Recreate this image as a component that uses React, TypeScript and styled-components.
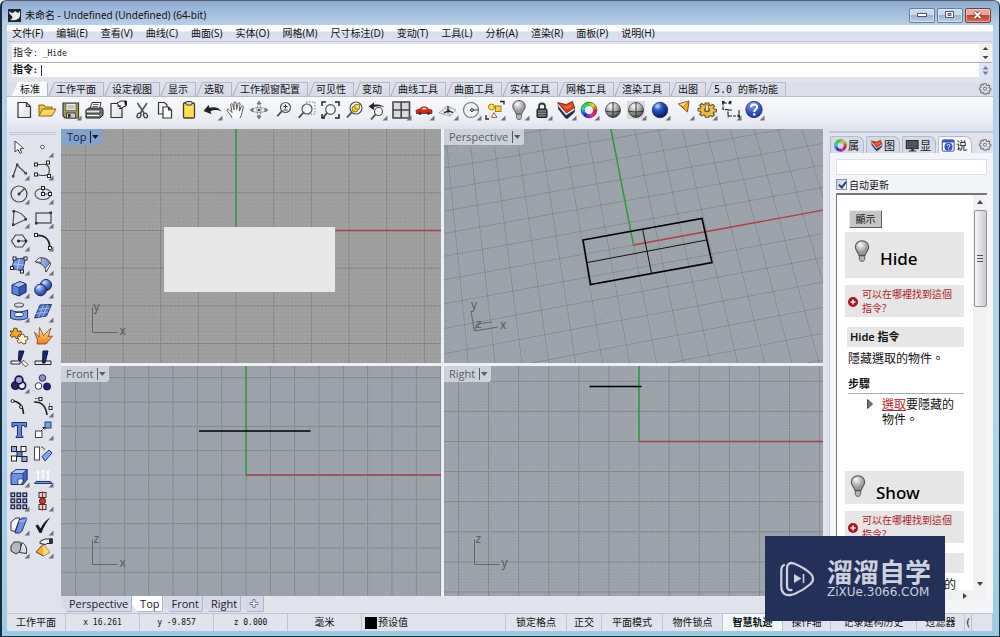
import React from 'react';
import styled, { createGlobalStyle, css } from 'styled-components';

const UI_FONT = '"Noto Sans", "Noto Sans CJK SC", sans-serif';
const VIEW_FONT = '"Open Sans", "Noto Sans", sans-serif';
const SONG_FONT = '"DejaVu Sans Mono", "Noto Sans CJK SC", monospace';
const HELP_FONT = '"Noto Sans", "Noto Sans CJK TC", sans-serif';

const GlobalStyle = createGlobalStyle`
  * { box-sizing: border-box; }
  body { margin: 0; font-family: ${UI_FONT}; font-size: 10px; color: #111; overflow: hidden; }
  button { font: inherit; color: inherit; margin: 0; padding: 0; border: 0; background: none; }
  svg { display: block; }
`;

/* ---------- frame ---------- */

const Window = styled.div`
  display: flex;
  flex-direction: column;
  height: 100vh;
  border: solid #16303f;
  border-width: 1px 1px 1px 2px;
  border-top-color: #5a5f70;
  border-radius: 6px 6px 0 0;
  background: linear-gradient(#8eabd0 0, #b7d0ea 24px, #b5d5ef 60%, #9ccbe4 100%);
  overflow: hidden;
`;

const TitleBar = styled.header`
  display: flex;
  align-items: center;
  gap: 4px;
  flex: none;
  height: 24px;
  padding: 4px 8px 0 6px;
`;

const Title = styled.h1`
  flex: 1;
  margin: 0;
  font-size: 10px;
  font-weight: 400;
  line-height: 16px;
  white-space: nowrap;
`;

const CaptionButtons = styled.div`
  display: flex;
  gap: 2px;
`;

const CaptionButton = styled.button<{ $close?: boolean }>`
  display: flex;
  align-items: center;
  justify-content: center;
  width: 26px;
  height: 15px;
  border: 1px solid ${(p) => (p.$close ? '#7d3a3c' : '#68809c')};
  border-radius: 2px;
  background: ${(p) =>
    p.$close
      ? 'linear-gradient(#e4a79c 0 45%, #c9402c 50%, #d9705a 100%)'
      : 'linear-gradient(#c8daee 0 45%, #9db6d2 50%, #b9cfe8 100%)'};
  box-shadow: inset 0 0 0 1px rgba(255, 255, 255, 0.4);
`;

const Client = styled.div`
  display: flex;
  flex-direction: column;
  flex: 1;
  min-height: 0;
  margin: 0 6px 5px 5px;
  background: #e0e2ec;
`;

const MenuBar = styled.nav`
  display: flex;
  gap: 13px;
  flex: none;
  height: 17px;
  padding-left: 5px;
  border-bottom: 1px solid #c3c7d8;
  background: linear-gradient(#fbfcfe 0 6px, #d8deee 7px, #dbe1f0 100%);
`;

const MenuItem = styled.button`
  line-height: 16px;
  white-space: nowrap;
`;

/* ---------- command line ---------- */

const CommandArea = styled.section`
  flex: none;
  padding: 2px 1px 5px 5px;
  font-family: ${SONG_FONT};
`;

const CommandRow = styled.div<{ $prompt?: boolean }>`
  display: flex;
  align-items: center;
  height: ${(p) => (p.$prompt ? 14 : 19)}px;
  border-bottom: ${(p) => (p.$prompt ? '0' : '1px solid #a9adb8')};
  background: #fff;
  font-weight: ${(p) => (p.$prompt ? 700 : 400)};
`;

const CommandText = styled.label`
  padding-left: 1px;
  line-height: 14px;
  white-space: pre;
`;

const Latin = styled.span`
  font-size: 8px;
`;

const CommandInput = styled.input`
  flex: 1;
  min-width: 0;
  height: 11px;
  margin-left: 3px;
  padding: 0 2px;
  border: 0;
  border-left: 1px solid #333;
  outline: 0;
  background: transparent;
  font: inherit;
`;

const Stepper = styled.div<{ $tint?: boolean }>`
  display: flex;
  align-items: center;
  justify-content: center;
  align-self: stretch;
  width: 13px;
  background: ${(p) => (p.$tint ? '#dfe4f2' : '#f3f3f4')};
`;

/* ---------- toolbar ---------- */

const TabStrip = styled.div`
  display: flex;
  align-items: stretch;
  flex: none;
  height: 15px;
  padding: 0 1px 0 5px;
  border-bottom: 1px solid #b8bccb;
  font-family: ${SONG_FONT};
  background: #dcdee8;
`;

const ToolTab = styled.button<{ $on?: boolean }>`
  position: relative;
  flex: none;
  padding: 0 7px 0 8px;
  border-top: 1px solid ${(p) => (p.$on ? '#fff' : '#b4b8c8')};
  border-right: 1px solid #b4b8c8;
  background: ${(p) => (p.$on ? '#f8f9fc' : 'linear-gradient(#dfe2ec, #d6d9e6)')};
  clip-path: polygon(6px 0, 100% 0, 100% 100%, 0 100%);
  line-height: 13px;
  white-space: nowrap;
  &::before {
    content: '';
    position: absolute;
    left: 3px;
    top: 0;
    bottom: 0;
    width: 1px;
    background: ${(p) => (p.$on ? '#fff' : '#a4a8ba')};
    transform: skewX(-22deg);
  }
`;

const Spacer = styled.div`
  flex: 1;
`;

const ToolBar = styled.div`
  flex: none;
  height: 32px;
  padding: 1px 0 0 5px;
  background: linear-gradient(#f8f9fc, #eceef4 70%, #dfe2ec);
`;

const ToolRow = styled.div`
  display: grid;
  grid-template-columns: repeat(32, minmax(0, 1fr));
  justify-items: center;
  max-width: 754px;
`;

const ToolButton = styled.button`
  width: 24px;
  height: 24px;
`;

/* ---------- workspace ---------- */

const Workspace = styled.div`
  display: flex;
  flex: 1;
  min-height: 0;
`;

const Palette = styled.aside`
  flex: none;
  width: 54px;
  padding-top: 3px;
`;

const PaletteGrip = styled.div`
  height: 3px;
  margin: 0 5px 0 2px;
  border: solid #c4c7d2;
  border-width: 1px 0;
`;

const PaletteGrid = styled.div`
  display: grid;
  grid-template: repeat(18, minmax(0, 1fr)) / 24px 24px;
  align-items: center;
  height: 425px;
`;

const Center = styled.main`
  display: flex;
  flex-direction: column;
  flex: 1;
  min-width: 0;
`;

const Viewports = styled.div`
  display: grid;
  grid-template: 233fr 230fr / 380fr 379fr;
  gap: 3px;
  flex: 1;
  min-height: 0;
  background: #eef0f5;
`;

const Viewport = styled.section<{ $active?: boolean }>`
  position: relative;
  overflow: hidden;
  background: ${(p) => (p.$active ? '#a1a2a1' : '#a0a7af')};
  > svg {
    position: absolute;
    inset: 0;
  }
`;

const ViewLabel = styled.button<{ $active?: boolean }>`
  position: absolute;
  left: 0;
  top: 0;
  display: flex;
  align-items: center;
  gap: 4px;
  height: 16px;
  padding: 0 3px 0 ${(p) => (p.$active ? 6 : 5)}px;
  border-radius: 0 0 3px 0;
  background: ${(p) => (p.$active ? '#84a3cb' : '#cdd2d9')};
  color: ${(p) => (p.$active ? '#0b1a3c' : '#575c64')};
  font-family: ${VIEW_FONT};
  font-size: 11px;
  line-height: 16px;
`;

const ViewTabs = styled.div`
  display: flex;
  align-items: flex-start;
  flex: none;
  height: 17px;
`;

const ViewTab = styled.button<{ $on?: boolean }>`
  height: 16px;
  padding: 0 3px 0 8px;
  border: solid #b0b5cc;
  border-width: 0 1px 1px 0;
  border-radius: 0 0 2px 0;
  background: ${(p) => (p.$on ? '#fff' : '#d5d9ea')};
  clip-path: polygon(0 0, 100% 0, 100% 100%, 6px 100%, 0 9px);
  font-family: ${VIEW_FONT};
  font-size: 11px;
  line-height: 15px;
  color: #222;
`;

/* ---------- help panel ---------- */

const Panel = styled.aside`
  display: flex;
  flex-direction: column;
  flex: none;
  width: 164px;
  margin: 2px 0 0 6px;
  border-top: 2px solid #b9c9e0;
`;

const PanelTabs = styled.div`
  display: flex;
  gap: 2px;
  flex: none;
  height: 20px;
  padding: 3px 1px 0 1px;
`;

const PanelTab = styled.button<{ $on?: boolean }>`
  display: flex;
  align-items: center;
  width: 34px;
  padding-left: 2px;
  border: 1px solid #b4b8c8;
  border-bottom: 0;
  border-radius: 2px 7px 0 0;
  background: ${(p) => (p.$on ? '#f8f9fc' : '#d6d9e6')};
  font-size: 11px;
  line-height: 15px;
`;

const PanelBody = styled.div`
  display: flex;
  flex-direction: column;
  flex: 1;
  min-height: 0;
  padding: 6px 6px 0 6px;
  border-left: 1px solid #c9ccd8;
  background: #f4f5f9;
`;

const SearchBox = styled.input`
  width: 100%;
  height: 16px;
  padding: 0 3px;
  border: 1px solid #dcdfe7;
  background: #fff;
  font: inherit;
`;

const AutoUpdate = styled.label`
  display: flex;
  align-items: center;
  gap: 2px;
  height: 18px;
  white-space: nowrap;
`;

const TickBox = styled.input`
  appearance: none;
  width: 11px;
  height: 11px;
  margin: 0;
  border: 1px solid #8497ad;
  background: linear-gradient(135deg, #c6cfdb, #f6f8fa);
  position: relative;
  &:checked::after {
    content: '';
    position: absolute;
    left: 3px;
    top: 0;
    width: 3px;
    height: 6px;
    border: solid #2a3f80;
    border-width: 0 2px 2px 0;
    transform: rotate(38deg);
  }
`;

const HelpFrame = styled.div`
  display: flex;
  flex: 1;
  min-height: 0;
  border: solid #73767d;
  border-width: 2px 0 0 1px;
  background: #fff;
`;

const HelpPage = styled.article`
  flex: 1;
  min-width: 0;
  overflow: hidden;
  padding: 15px 9px 0 8px;
  font-family: ${HELP_FONT};
  font-size: 12px;
  line-height: 15px;
`;

const ShowButton = styled.button`
  display: block;
  width: 33px;
  height: 18px;
  margin: 0 0 4px 4px;
  border: 1px solid;
  border-color: #ededed #5c5c5c #5c5c5c #ededed;
  background: #c6c6c6;
  font-size: 10px;
  line-height: 15px;
`;

const CommandTitle = styled.h2<{ $compact?: boolean }>`
  display: flex;
  align-items: flex-end;
  gap: 5px;
  height: ${(p) => (p.$compact ? 33 : 46)}px;
  margin: 0;
  padding: ${(p) => (p.$compact ? '0' : '0 0 8px 4px')};
  background: #e6e6e6;
  color: #000;
  font-size: 17px;
  font-weight: 500;
  line-height: 22px;
  > svg {
    align-self: flex-start;
    margin-top: ${(p) => (p.$compact ? 2 : 6)}px;
  }
`;

const WhereLink = styled.a`
  display: flex;
  align-items: center;
  gap: 3px;
  height: 32px;
  margin: 7px 0 10px;
  padding-left: 2px;
  background: #e6e6e6;
  color: #b01825;
  font-size: 10px;
  line-height: 14px;
  text-decoration: none;
  > svg {
    flex: none;
  }
`;

const SectionTitle = styled.h3`
  height: 20px;
  margin: 0 0 0 2px;
  padding-left: 3px;
  background: #e6e6e6;
  font-size: 11px;
  font-weight: 600;
  line-height: 20px;
`;

const Paragraph = styled.p`
  margin: 4px -6px 10px 3px;
  white-space: nowrap;
`;

const StepsTitle = styled.h4`
  margin: 0 0 3px 3px;
  padding-bottom: 1px;
  border-bottom: 1px solid #aaadb3;
  font-size: 11px;
  font-weight: 600;
  line-height: 16px;
`;

const Steps = styled.ul`
  list-style: none;
  margin: 0 -6px 44px 21px;
  padding: 0;
`;

const Step = styled.li`
  display: flex;
  gap: 8px;
  > svg {
    flex: none;
    margin-top: 2px;
  }
  a {
    color: #c2222c;
  }
`;

const HelpScroll = styled.div`
  display: flex;
  flex-direction: column;
  align-items: center;
  flex: none;
  width: 14px;
  padding: 5px 0 4px;
  background: #f1f1f2;
`;

const HelpScrollAcross = styled.div`
  display: flex;
  align-items: center;
  justify-content: flex-end;
  flex: none;
  height: 11px;
  margin-bottom: 12px;
  padding-right: 20px;
  border-left: 1px solid #73767d;
  background: #f1f1f2;
`;

const ScrollThumb = styled.div`
  display: flex;
  align-items: center;
  justify-content: center;
  width: 13px;
  height: 97px;
  margin: 6px 0 auto;
  border: 1px solid #8f9196;
  border-radius: 2px;
  background: linear-gradient(90deg, #f6f6f6, #c9cacd);
`;

/* ---------- status ---------- */

const StatusBar = styled.footer`
  display: flex;
  flex: none;
  height: 18px;
  border-top: 1px solid #bfc3cf;
  font-family: ${SONG_FONT};
  line-height: 17px;
`;

const StatusCell = styled.button<{ $w?: number; $on?: boolean }>`
  display: flex;
  align-items: center;
  justify-content: ${(p) => (p.$w ? 'center' : 'flex-start')};
  gap: 1px;
  ${(p) =>
    p.$w
      ? css`
          flex: none;
          width: ${p.$w}px;
        `
      : css`
          flex: 1;
          min-width: 0;
          padding-left: 3px;
        `}
  border-right: 1px solid #bfc3cf;
  background: ${(p) => (p.$on ? '#eef8fe' : 'transparent')};
  font-weight: ${(p) => (p.$on ? 700 : 400)};
  white-space: pre;
`;

const Swatch = styled.span`
  width: 12px;
  height: 12px;
  background: #000;
`;

const Watermark = styled.div`
  position: fixed;
  right: 55px;
  bottom: 16px;
  display: flex;
  align-items: center;
  gap: 12px;
  width: 180px;
  height: 85px;
  padding-left: 15px;
  background: #233057;
  color: #ccd1dc;
`;

const Brand = styled.div`
  padding-bottom: 4px;
`;

const BrandName = styled.div`
  font-family: 'Noto Sans CJK SC', sans-serif;
  font-size: 26px;
  font-weight: 700;
  line-height: 30px;
  white-space: nowrap;
`;

const BrandSite = styled.div`
  font-family: 'DejaVu Sans', sans-serif;
  font-size: 12px;
  line-height: 12px;
`;

/* ---------- icon artwork, 24 x 24 each ---------- */

const K = '#333';
const Sq = ({ x, y, s = 3 }: { x: number; y: number; s?: number }) => (
  <rect x={x - s / 2} y={y - s / 2} width={s} height={s} fill="#fff" stroke="#222" strokeWidth="1" />
);
const Lens = ({ x = 14, y = 10, r = 4.5 }: { x?: number; y?: number; r?: number }) => (
  <>
    <circle cx={x} cy={y} r={r} fill="#f4f5f8" stroke="#555" strokeWidth="1.2" />
    <path d={`M${x - r * 0.75} ${y + r * 0.75}L${x - r * 0.75 - 4.5} ${y + r * 0.75 + 5}`} stroke="#444" strokeWidth="1.8" />
  </>
);
const HUES = Array.from({ length: 18 }, (_, i) => i * 20);
const Ring = ({ r = 6.2, w = 3.4 }: { r?: number; w?: number }) => (
  <>
    {HUES.map((h) => {
      const a = (h * Math.PI) / 180;
      const b = ((h + 21) * Math.PI) / 180;
      return (
        <path
          key={h}
          d={`M${12 + r * Math.cos(a)} ${12 + r * Math.sin(a)}A${r} ${r} 0 0 1 ${12 + r * Math.cos(b)} ${12 + r * Math.sin(b)}`}
          fill="none"
          stroke={`hsl(${360 - h}, 85%, 48%)`}
          strokeWidth={w}
        />
      );
    })}
    <circle cx="12" cy="12" r={r + w / 2} fill="none" stroke="#444" strokeWidth=".7" />
    <circle cx="12" cy="12" r={r - w / 2} fill="none" stroke="#555" strokeWidth=".6" />
  </>
);
const Bulb = () => (
  <>
    <path d="M12 2.500c-3.700 0-6.200 2.600-6.200 5.900 0 3.400 2.900 4.400 3.400 7.600h5.600c.5-3.200 3.400-4.200 3.400-7.600 0-3.300-2.500-5.900-6.200-5.900z" fill="url(#silver)" stroke="#555" />
    <path d="M9.500 16.500h5v3l-1.200 2h-2.600l-1.200-2z" fill="#b5b5b5" stroke="#555" strokeWidth=".8" />
    <path d="M8.500 7c.6-1.300 1.700-2 3-2.100" fill="none" stroke="#fff" strokeWidth="1.200" />
  </>
);
const Wedge = () => (
  <>
    <path d="M4.500 8v3l7 9 2 .5 7-6.500V9.500z" fill="#23295c" stroke="#15183a" strokeWidth=".6" />
    <path d="M4 5.500v2.500l8 9.500 8.500-5.500V9z" fill="#f3f3f7" stroke="#444" strokeWidth=".5" />
    <path d="M3.500 4.500l8.500 2 6.500-3 2 6-8 5.500z" fill="#e33a1c" stroke="#5a1408" strokeWidth=".7" />
    <path d="M8 7.500l4.500 1.200 5-2.400.5 2-5 2.700z" fill="#f7793c" />
  </>
);
const Gray = () => (
  <>
    <circle cx="12" cy="12" r="7.500" fill="url(#ball)" stroke="#444" strokeWidth=".8" />
    <path d="M12 4.500v15M4.500 13c4 1.300 11 1.300 15 0" fill="none" stroke="#333" strokeWidth="1" />
  </>
);
const Gear = ({ fill = 'none', stroke = '#777', w = 1.8 }: { fill?: string; stroke?: string; w?: number }) => (
  <>
    <path
      d="M10 4h4l.5 2.500 1.500.7 2.200-1.400 2.100 2.300-1.400 2 .6 1.400 2.500.5v3l-2.500.5-.7 1.500 1.300 2-2.200 2.100-2-1.300-1.500.6L13.800 22h-3.500l-.6-2.500-1.400-.6-2.100 1.300L4 18l1.400-2-.6-1.500L2.300 14v-3l2.500-.6.6-1.400L4 7l2.200-2.200 2 1.400 1.400-.7z"
      transform="translate(0 -1)"
      fill={fill}
      stroke={stroke}
      strokeWidth={w}
    />
    <circle cx="12" cy="11.500" r="2.500" fill="#f0f1f5" stroke={stroke} strokeWidth={w} />
  </>
);
const Cube = ({ c = '#5b82dd' }: { c?: string }) => (
  <>
    <path d="M5 9l8-3.500 6 2.500v8l-7 4-7-2.500z" fill={c} stroke="#1c2c66" />
    <path d="M5 9l8-3.500 6 2.500-7 3.500z" fill="#a9c0f4" stroke="#1c2c66" strokeWidth=".7" />
    <path d="M12 11.500L19 8v8l-7 4z" fill="#3357b8" stroke="#1c2c66" strokeWidth=".7" />
  </>
);

type Tool = [name: string, art: React.ReactNode, flyout?: boolean];

const STANDARD: Tool[] = [
  ['新建', <path d="M6 4.500h8.500l4 4v11H6zM14.500 4.500v4h4" fill="url(#paper)" stroke={K} strokeWidth="1.200" />],
  ['打开', <>
    <path d="M4 18V7h5l1.500 2H17v3" fill="#f3c53b" stroke="#8a6410" />
    <path d="M4 18l3.500-7H21l-4 7z" fill="#fbd75b" stroke="#8a6410" />
  </>],
  ['保存', <>
    <path d="M4 5h15.500v15H6l-2-2z" fill="#a39a4e" stroke="#3d3d33" strokeWidth="1.200" />
    <rect x="7" y="5.500" width="10" height="7" fill="#eceef0" stroke="#555" strokeWidth=".7" />
    <path d="M8.500 8h7M8.500 10h7" stroke="#888" strokeWidth=".8" />
    <rect x="7.500" y="15" width="9" height="5" fill="#ccc" stroke="#333" strokeWidth=".8" />
    <rect x="9" y="16" width="2.500" height="3.500" fill="#333" />
  </>, true],
  ['打印', <>
    <path d="M8 11l2-6.500h9L17.500 11" fill="#fff" stroke={K} />
    <path d="M11 6.500h5.500M10.500 8.500H16" stroke="#666" />
    <path d="M4 12l3-2h13l1 2v5l-3 3H4z" fill="#777" stroke="#222" />
    <path d="M4 12h14v3H4z" fill="#e9e9e9" stroke="#222" strokeWidth=".8" />
    <path d="M5 17.500h12" stroke="#fff" strokeWidth="1.200" />
  </>],
  ['文件属性', <>
    <path d="M5 5.500h11v14H5z" fill="url(#paper)" stroke={K} strokeWidth="1.200" />
    <path d="M11 5l4-2h5v5l-3 1-2 1.500z" fill="#fff" stroke="#222" />
    <path d="M18 3h3v4.500h-2z" fill="#222" />
    <path d="M11 8h4M13 10.500h3" stroke="#222" />
  </>],
  ['剪切', <>
    <path d="M7.500 5l6.500 10M17 5l-6.500 10" stroke="#555" strokeWidth="1.600" />
    <ellipse cx="9" cy="17.500" rx="1.800" ry="2.500" fill="none" stroke="#333" strokeWidth="1.200" transform="rotate(25 9 17.500)" />
    <ellipse cx="15.500" cy="17.500" rx="1.800" ry="2.500" fill="none" stroke="#333" strokeWidth="1.200" transform="rotate(-25 15.500 17.500)" />
  </>],
  ['复制', <>
    <path d="M5.500 4.500h6l2.500 2.500v9H5.500z" fill="#f4f4f7" stroke={K} strokeWidth="1.200" />
    <path d="M10 9h5.500l3 3v8H10zM15.500 9v3h3" fill="#fff" stroke={K} strokeWidth="1.200" />
  </>],
  ['粘贴', <>
    <rect x="6.500" y="5" width="11" height="15" rx="1" fill="#fbdf55" stroke="#4a4020" strokeWidth="1.300" />
    <rect x="9" y="3.500" width="6" height="3.500" rx="1" fill="#ddd" stroke="#333" />
  </>],
  ['复原', <path d="M3.500 13l5-6 1 2.800c5-1.600 9.500-.3 12 3.700-3.500-1.800-7-2-11-.3l1 3z" fill="#222" />, true],
  ['平移', <path d="M8 20c-1-3-3.500-5-4.800-7.500-.5-1.500 1.200-1.800 2-.8L8 14.500 6.800 7c-.2-1.600 1.600-1.800 2-.2l1.200 5L10 5c0-1.500 2-1.500 2.100 0l.5 6.500L14 5.800c.3-1.500 2.200-1.200 2 .4L15.300 13l2.200-4.500c.8-1.400 2.300-.6 1.800.8-1 3-1.300 7.500-3.300 10.700" fill="#fafafa" stroke="#555" strokeWidth="1" />],
  ['旋转视图', <>
    <ellipse cx="12" cy="12" rx="6.500" ry="2.500" fill="none" stroke="#888" strokeWidth=".8" />
    <ellipse cx="12" cy="12" rx="2" ry="6" fill="none" stroke="#888" strokeWidth=".8" />
    <path d="M12 3l2 3h-4zM12 21l2-3h-4zM3 12l3-2v4zM21 12l-3-2v4z" fill="#888" stroke="#555" strokeWidth=".6" />
    <circle cx="12" cy="12" r="1.300" fill="#555" />
  </>],
  ['动态缩放', <><Lens x={14.5} y={9.5} r={5} /><path d="M12.500 8.500h4M14.500 6.500v4M12.500 12h4" stroke="#333" /></>],
  ['框选缩放', <><rect x="11" y="4" width="9" height="12" fill="none" stroke="#777" strokeDasharray="1.500 1.500" /><Lens x={12} y={11} r={5} /></>],
  ['缩放范围', <><Lens x={12.500} y={11.500} r={4.800} /><path d="M4 8V4h4M17 4h4v4M21 16v4h-4M4 16v4h3" fill="none" stroke="#222" strokeWidth="1.500" /></>],
  ['缩放选取', <><Lens x={14} y={10} r={6} /><circle cx="13" cy="11" r="3" fill="#f8db30" stroke="#8c7510" /><rect x="13" y="6.500" width="4.500" height="4.500" fill="#fae44d" stroke="#8c7510" strokeWidth=".8" /></>],
  ['复原视图', <><Lens x={13.500} y={13.500} r={4} /><path d="M3.500 8.500L9 4.500v2.300c4-1 8 0 10.500 2.700-3.500-1.500-7-1.500-10.500-.5V12z" fill="#222" /></>, true],
  ['四个工作视窗', <path d="M4 4h16.500v16H4zM12.200 4v16M4 12h16.500" fill="#d9dadc" stroke="#444" strokeWidth="1.600" />, true],
  ['汽车', <>
    <path d="M4 12.500c2.500-1.600 4.500-1 6-3.500h4.500c1 1 1.500 2 2.500 2.500l3 .6v3.400H4.500z" fill="#d92118" stroke="#7d0b07" strokeWidth=".7" />
    <path d="M10.500 9.800h3.400l.8 1.700h-5z" fill="#f7d6d3" />
    <circle cx="8" cy="15.500" r="1.400" fill="#333" /><circle cx="16.500" cy="15.500" r="1.400" fill="#333" />
  </>, true],
  ['工作平面', <>
    <path d="M3 15l8-7 9 4-6 6zM6 12.500l9 4.500M8.500 10l9 4.500M7 16l8-6" fill="none" stroke="#aaa" />
    <path d="M12 13V8M12 13l5 1.500M12 13l-4 2" stroke="#222" strokeWidth="1.300" /><rect x="11" y="12" width="2.500" height="2.500" fill="#222" />
  </>, true],
  ['中心点', <><circle cx="12" cy="12" r="7.500" fill="#f1f2f5" stroke="#777" strokeWidth="1.200" /><path d="M12 12h8" stroke="#444" /><circle cx="13" cy="12" r="1.400" fill="#fff" stroke="#222" /></>, true],
  ['物件锁点', <>
    <path d="M17 3.500h4v3M3 17v4h3" fill="none" stroke="#222" strokeWidth="1.300" />
    <circle cx="8.500" cy="9" r="3" fill="#fbe04a" stroke="#a07d12" /><rect x="12.500" y="8" width="5.500" height="5.500" fill="#fbd02f" stroke="#a07d12" />
    <path d="M11 14.500l3 5H8.500z" fill="#eee" stroke="#aa6a3c" />
  </>, true],
  ['显示隐藏', <Bulb />, true],
  ['锁定', <>
    <path d="M9 11V8.500c0-4 6-4 6 0V11" fill="none" stroke="#333" strokeWidth="1.800" />
    <rect x="7" y="11" width="10" height="8.500" rx="1" fill="#555" stroke="#111" /><path d="M8 13h8M8 15.500h8M8 18h8" stroke="#999" strokeWidth=".8" />
  </>, true],
  ['图层', <Wedge />, true],
  ['属性', <Ring />, true],
  ['着色', <Gray />],
  ['渲染模式', <><rect x="3" y="3" width="18" height="18" fill="#d9dadd" /><Gray /></>, true],
  ['渲染', <circle cx="12" cy="12" r="7.800" fill="url(#blueball)" stroke="#0c1c55" strokeWidth=".6" />, true],
  ['聚光灯', <><path d="M6.500 6l10.500-3-1.500 11z" fill="#f4a92b" stroke="#8a5210" /><path d="M6.500 6l10.500-3-6 6z" fill="#fbdc8b" stroke="#8a5210" strokeWidth=".6" /></>, true],
  ['选项', <><g transform="translate(1 2.500) scale(.92 .8)"><Gear fill="#e8bd4b" stroke="#6b5216" w={1.3} /></g><path d="M10.500 7h3v6h-3z" fill="#ece6cf" stroke="#6b5216" strokeWidth=".7" /></>, true],
  ['尺寸标注', <>
    <path d="M4 3.500v8h5v8M4 5h7M11 3.500v3M9 18h8M20 12v8M9 12h5" fill="none" stroke="#222" strokeWidth="1.100" strokeDasharray="4 1" />
    <path d="M3 3h2.500v2.500H3zM10 3h2.500v2.500H10zM18.500 16.500H21V19h-2.500z" fill="#222" />
  </>, true],
  ['说明', <><circle cx="12" cy="11.500" r="8.200" fill="url(#helpball)" stroke="#1d2f86" strokeWidth=".8" /><path d="M9 9.300c.2-4 6.500-3.500 6.100 0-.2 2-2.900 2-2.900 4.700" fill="none" stroke="#fff" strokeWidth="2.100" /><rect x="11.100" y="15.300" width="2.200" height="2.200" fill="#fff" /></>, true],
];

const PALETTE: Tool[] = [
  ['选取', <path d="M8 6v11l3-2.500 2 4 1.800-1-1.800-3.700 3.500-.3z" fill="#fff" stroke="#444" strokeWidth="1" />],
  ['点', <circle cx="11.500" cy="12" r="1.800" fill="#fff" stroke="#555" />, true],
  ['多重直线', <><path d="M6 18.500L10 7l9 8.500" fill="none" stroke="#444" strokeWidth="1.200" /><path d="M5 17h2.500v2.500H5zM9 5.500h2.500V8H9zM17.500 14H20v2.500h-2.500z" fill="#444" /></>, true],
  ['控制点曲线', <><path d="M5 6.500h6c9-2 8.500 10 5 10.500-5 1.500-7-.5-11 0" fill="none" stroke="#444" strokeWidth="1.200" /><Sq x={5} y={6.500} /><Sq x={17} y={4.500} /><Sq x={5} y={16.500} /><Sq x={18} y={18} /></>, true],
  ['圆', <><circle cx="12" cy="12" r="8" fill="none" stroke="#444" strokeWidth="1.200" /><path d="M12 12l6-6" stroke="#444" strokeWidth="1.200" /><circle cx="12" cy="12" r="1.500" fill="#333" /></>, true],
  ['椭圆', <><ellipse cx="12" cy="12" rx="8" ry="5.500" fill="none" stroke="#555" strokeWidth="1.200" /><path d="M12 6v6h7" fill="none" stroke="#444" /><Sq x={12} y={6} /><Sq x={12} y={12} /><Sq x={19} y={12} /></>, true],
  ['圆弧', <><path d="M7 5l-1 14M7 5c6 1 9 3 12 8M6.500 19l12-5.500" fill="none" stroke="#555" strokeWidth="1.200" /><path d="M5.500 4H8v2.500H5.500zM5 17.500h2.500V20H5zM17.500 12H20v2.500h-2.500z" fill="#333" /></>, true],
  ['矩形', <><rect x="5" y="7" width="15" height="10" fill="none" stroke="#444" strokeWidth="1.200" /><path d="M4 16h2.500v2.500H4zM18.500 5.500H21V8h-2.500z" fill="#333" /></>, true],
  ['多边形', <><path d="M8.500 6h7l4 6-4 6h-7l-4-6z" fill="none" stroke="#444" strokeWidth="1.200" /><path d="M12 12h7" stroke="#444" /><circle cx="11.500" cy="12" r="1.500" fill="#222" /><circle cx="19" cy="12" r="1.400" fill="#222" /></>, true],
  ['曲线圆角', <><path d="M5 6.500c8-.5 13 2 14 12" fill="none" stroke="#222" strokeWidth="1.800" /><Sq x={5} y={6} /><Sq x={19} y={19} /></>, true],
  ['曲面', <><path d="M7 6l11.500-1-3 13L5 15.500z" fill="#6f93e4" stroke="#24346e" /><path d="M12.500 5.500L10 17M6 11l10.800 1" stroke="#c9d8fb" strokeWidth=".8" /><Sq x={7.500} y={5.500} /><Sq x={18.500} y={5.500} /><Sq x={5} y={15} /><Sq x={15} y={18.500} /></>, true],
  ['曲面圆角', <><path d="M4.500 9C8 2.500 17 4 19.500 11L15 19c0-5-4-9-10.500-10z" fill="url(#steel)" stroke="#333" /><path d="M4.500 9C6 6 8 4.800 10 4.700L10.500 9.500C8 8.700 6.500 9 4.500 9z" fill="#f4f4f8" stroke="#333" strokeWidth=".7" /><path d="M15 19l-.5-3.500 4.500-6 .5 2z" fill="#fff" stroke="#333" strokeWidth=".7" /></>, true],
  ['立方体', <Cube />, true],
  ['布尔运算', <><circle cx="15" cy="9" r="5.500" fill="url(#boolball)" stroke="#16255f" /><circle cx="9.500" cy="14" r="5.800" fill="url(#boolball)" stroke="#16255f" /></>, true],
  ['投影', <><ellipse cx="12" cy="5" rx="4.500" ry="2" fill="none" stroke="#555" strokeWidth="1.100" /><path d="M3.500 10c5 2.500 12 2.500 17 0v8c-5 2.500-12 2.500-17 0z" fill="#7c9deb" stroke="#1c2c66" /><ellipse cx="12" cy="14.500" rx="4.500" ry="2.200" fill="#fff" stroke="#1c2c66" /></>, true],
  ['网格', <><path d="M9 5l11.500-.5-5 11.500-12 2z" fill="#5578c8" stroke="#24346e" /><path d="M12.500 5L7.500 17.500M16.500 4.800L11.500 16.800M7 9.300l11.500-1M5 13.500l12-1.500" stroke="#b5c6f1" strokeWidth=".8" /></>, true],
  ['组合', <><path d="M3 7l3 .5L7 4l3 .5.5 3 3.500-.5.500 3-3 1 .5 3-3 .5-1.500-2.500-2.500 1.500-2-2.500 2-1.500z" fill="#f0a826" stroke="#6d430a" /><path d="M10 12l3 .5 1-2.500 3 .5.500 2.500 3-.5.500 3-2.500 1 .5 3-3 .5-1.500-2-2.500 1.500-2-2.500 2-1.500z" fill="#fdf6df" stroke="#6d5a2a" /></>],
  ['炸开', <path d="M3.500 8l4.500 5 .5-9.500 4 8L20 4l-3 8.500 4.500-.5-6.500 8H6l.5-4z" fill="url(#flame)" stroke="#8a3f05" strokeWidth=".8" />],
  ['修剪', <><path d="M4 14h9v3H4z" fill="#fff" stroke="#222" /><path d="M12 4h5l-3.500 10-2-1z" fill="#1b2a78" stroke="#0d1440" /><path d="M14 15l3-1.500 4 4-2.500 2.500z" fill="#eee" stroke="#555" /></>],
  ['分割', <><path d="M4 14h16v3.500H4z" fill="#e4e8f4" stroke="#222" /><path d="M12 4h5l-3 12h-2.500z" fill="#1b2a78" stroke="#0d1440" /></>],
  ['群组', <><circle cx="8.500" cy="14.500" r="3.800" fill="#26265f" stroke="#16164e" strokeWidth="1.600" /><circle cx="15" cy="14.500" r="3.600" fill="#e9e9f5" stroke="#16164e" strokeWidth="1.700" /><circle cx="12" cy="9" r="3.900" fill="#a8a8da" stroke="#16164e" strokeWidth="1.700" /></>, true],
  ['取消群组', <><circle cx="11.500" cy="7" r="3.300" fill="#8c8cd0" stroke="#33335e" /><circle cx="7.500" cy="15" r="3.300" fill="#fff" stroke="#33335e" /><circle cx="16" cy="15.500" r="3.500" fill="#1f2170" stroke="#14143e" /></>],
  ['编辑点', <><path d="M4 6c7-.5 12 4 12.500 13" fill="none" stroke="#222" strokeWidth="1.600" /><circle cx="5.500" cy="6" r="1.500" fill="#fff" stroke="#222" /><circle cx="14" cy="12" r="1.500" fill="#fff" stroke="#222" /></>],
  ['控制点', <><path d="M3 7c9-.5 12 5 13 13" fill="none" stroke="#222" strokeWidth="1.600" /><path d="M4 3.500h6M18.500 8v5" stroke="#555" strokeDasharray="1.500 1" /><Sq x={9.500} y={4} /><Sq x={19.500} y={13} /></>, true],
  ['文字', <path d="M5 4.500h14.500v4.500h-1.500l-.8-1.500h-2.700v10l1.500 1v1H9v-1l1.500-1v-10H7.800L7 9H5z" fill="#5f88df" stroke="#1b2f73" />],
  ['移动', <><rect x="14" y="4" width="6" height="6" fill="#7d9ceb" stroke="#26387a" /><rect x="4.500" y="13" width="6.500" height="6.500" fill="#fff" stroke="#444" /><path d="M10 13l4-4M11.500 9.500h2.500V12" fill="none" stroke="#222" strokeDasharray="2 .6" /></>, true],
  ['复制物件', <><rect x="4.500" y="4.500" width="5" height="5" fill="#8fa9ec" stroke="#222" /><rect x="14" y="4.500" width="5" height="5" fill="#fff" stroke="#222" /><rect x="10" y="9.500" width="5" height="5" fill="#5f80da" stroke="#222" /><rect x="4.500" y="14" width="5" height="5" fill="#fff" stroke="#222" /><rect x="15" y="14.500" width="5" height="5" fill="#8fa9ec" stroke="#222" /></>],
  ['旋转', <><rect x="3.500" y="5" width="5" height="13" fill="#fff" stroke="#444" /><path d="M11 14.500l7-6.500 3 3-7 8z" fill="#8aa6ee" stroke="#26387a" /><path d="M10 5c2 0 3 1 3.500 3" fill="none" stroke="#444" /></>],
  ['实体工具', <>
    <path d="M4 8.500L9 4.500h11v10l-4 5H4z" fill="#6f93e4" stroke="#1c2c66" />
    <path d="M4 8.500L9 4.500h11l-4 4z" fill="#b3c7f6" stroke="#1c2c66" strokeWidth=".7" />
    <path d="M16 8.500l4-4v10l-4 5z" fill="#3e63c2" stroke="#1c2c66" strokeWidth=".7" />
    <path d="M11 14h5v2l-2 3.500h-3z" fill="#fff" stroke="#1c2c66" strokeWidth=".7" />
  </>, true],
  ['拉伸', <><path d="M7 15V6M12 14V5M17 15V6" stroke="#fff" strokeWidth="1.500" /><path d="M5 8l2-3 2 3zM10 7l2-3 2 3zM15 8l2-3 2 3z" fill="#fff" /><path d="M5 16.500h14.500l1.500 2H3.500z" fill="#7b98df" stroke="#24346e" /></>, true],
  ['阵列', <>{[5, 11, 17].map((y) => [5, 11, 17].map((x) => <rect key={`${x}${y}`} x={x - 1} y={y - 1} width="3.600" height="3.600" fill="#b9c6ee" stroke="#1d2348" strokeWidth="1.300" />))}</>, true],
  ['对齐', <><rect x="8" y="3.500" width="7" height="5" fill="#ddd" stroke="#333" /><rect x="8" y="15.500" width="7" height="5" fill="#ddd" stroke="#333" /><path d="M11.500 2.500v19" stroke="#e02020" strokeWidth="1.300" /><circle cx="11.500" cy="12" r="3" fill="#d43a32" stroke="#5c1210" /></>, true],
  ['变形', <><path d="M4 9l5-4h4l-5 13.500-4-1z" fill="#f3f4f8" stroke="#333" /><path d="M12 8l3-3h5l-5 13-2.500 2H8z" fill="#6f93e4" stroke="#24346e" /><path d="M12 8h5l3-3" fill="none" stroke="#c9d8fb" strokeWidth=".8" /></>, true],
  ['检查', <path d="M4.500 12.500l2.500-1 2.500 4C12 10.500 15 7 19.500 4.500 15.500 9 12.500 14 10.500 20H8.500z" fill="#181818" />, true],
  ['体积', <><path d="M4 10l3-4h6l2 8-6 4-5-3z" fill="#b7b9bf" stroke="#333" /><path d="M15 6.500c4 2 5 6 4.500 11l-7-1 2.500-10z" fill="#dcdde2" stroke="#333" /></>, true],
  ['渲染工具', <>
    <path d="M12 8.500l7 7.500-6.500 4L5 16z" fill="#f3ae2f" stroke="#6d430a" />
    <path d="M12 8.500l7 7.500-6.500 4z" fill="#fbd77e" />
    <path d="M9 5.500l5-2.500h7v4.500h-5l-1.500 1-5.500-1z" fill="#f2f2f4" stroke="#222" />
    <path d="M18 2.500h4v5h-4z" fill="#333" />
  </>, true],
];

const Glyph = ({ art, flyout, size = 24 }: { art: React.ReactNode; flyout?: boolean; size?: number }) => (
  <svg width={size} height={size} viewBox="0 0 24 24" fill="none" aria-hidden="true">
    {art}
    {flyout && <path d="M22.500 17.500v5h-5z" fill="#707278" />}
  </svg>
);

const Tools = ({ items }: { items: Tool[] }) => (
  <>
    {items.map(([name, art, flyout]) => (
      <ToolButton key={name} aria-label={name}>
        <Glyph art={art} flyout={flyout} />
      </ToolButton>
    ))}
  </>
);

const PaintDefs = styled.svg`
  position: absolute;
`;

const SharedPaints = () => (
  <PaintDefs width="0" height="0" aria-hidden="true">
    <defs>
      <linearGradient id="paper" x2="1" y2="1"><stop stopColor="#fff" /><stop offset="1" stopColor="#dcdde2" /></linearGradient>
      <linearGradient id="steel" x2="1"><stop stopColor="#dbe4fa" /><stop offset="1" stopColor="#5b7fd4" /></linearGradient>
      <linearGradient id="flame" x2="0" y2="1"><stop stopColor="#fff0a0" /><stop offset="1" stopColor="#f07a10" /></linearGradient>
      <radialGradient id="silver" cx=".4" cy=".3"><stop stopColor="#f5f5f5" /><stop offset="1" stopColor="#9a9a9a" /></radialGradient>
      <radialGradient id="ball" cx=".4" cy=".25" r=".8"><stop stopColor="#fff" /><stop offset=".5" stopColor="#aaa" /><stop offset="1" stopColor="#333" /></radialGradient>
      <radialGradient id="blueball" cx=".35" cy=".25" r=".8"><stop stopColor="#cfe0ff" /><stop offset=".35" stopColor="#2456c4" /><stop offset="1" stopColor="#06154f" /></radialGradient>
      <radialGradient id="boolball" cx=".35" cy=".25" r=".8"><stop stopColor="#d9e5ff" /><stop offset=".5" stopColor="#4f78d6" /><stop offset="1" stopColor="#1c3585" /></radialGradient>
      <radialGradient id="helpball" cx=".4" cy=".2" r=".9"><stop stopColor="#8ca6f2" /><stop offset=".6" stopColor="#3350bd" /><stop offset="1" stopColor="#1f3190" /></radialGradient>
    </defs>
  </PaintDefs>
);

/* ---------- viewport drawings ---------- */

const AXIS_X = '#a04248';
const AXIS_Y = '#2f9a3a';

const FlatGrid = ({ id, pitch, ox, oy, children }: { id: string; pitch: number; ox: number; oy: number; children: React.ReactNode }) => {
  const step = pitch / 10;
  const minor = Array.from({ length: 9 }, (_, i) => `M${(i + 1) * step} 0V${pitch}M0 ${(i + 1) * step}H${pitch}`).join('');
  return (
    <svg width="100%" height="100%" aria-hidden="true">
      <defs>
        <pattern id={id} x={ox - 0.5} y={oy - 0.5} width={pitch} height={pitch} patternUnits="userSpaceOnUse">
          <path d={minor} stroke="#000" strokeOpacity=".045" />
          <path d={`M.5 0V${pitch}M0 .5H${pitch}`} stroke="#000" strokeOpacity=".18" />
        </pattern>
      </defs>
      <rect width="100%" height="100%" fill={`url(#${id})`} />
      <path d={`M${ox} ${oy}H2000`} stroke={AXIS_X} strokeWidth="1.500" />
      <path d={`M${ox} ${oy}V-10`} stroke={AXIS_Y} strokeWidth="1.500" />
      {children}
    </svg>
  );
};

const Triad = ({ x, y, h, v }: { x: number; y: number; h: string; v: string }) => (
  <g fill="#55585c" fontFamily="Open Sans, sans-serif" fontSize="12">
    <path d={`M${x} ${y - 25}V${y}H${x + 25}`} fill="none" stroke="#62666b" />
    <text x={x + 27} y={y + 2}>{h}</text>
    <text x={x + 1} y={y - 22}>{v}</text>
  </g>
);

const project = (x: number, y: number): string => {
  const w = 1 + 0.0018 * x + 0.0122 * y;
  const px = 189.500 + (24.500 * x - 4.400 * y) / w;
  const py = 116 + (-4.500 * x - 22.600 * y) / w;
  return `${px.toFixed(2)} ${py.toFixed(2)}`;
};

const perspectiveLines = (major: boolean) => {
  let d = '';
  for (let i = -160; i <= 160; i += 1) {
    if ((i % 10 === 0) !== major) continue;
    const k = i / 10;
    d += `M${project(k, -16)}L${project(k, 16)}M${project(-16, k)}L${project(16, k)}`;
  }
  return d;
};
const MAJOR = perspectiveLines(true);
const MINOR = perspectiveLines(false);

const PerspectiveScene = () => (
  <svg width="100%" height="100%" aria-hidden="true" fill="none">
    <path d={MINOR} stroke="#000" strokeOpacity=".03" />
    <path d={MAJOR} stroke="#000" strokeOpacity=".15" />
    <path d={`M${project(0, 0)}L${project(16, 0)}`} stroke="#b83a44" strokeWidth="1.300" />
    <path d={`M${project(0, 0)}L${project(0, 8)}`} stroke={AXIS_Y} strokeWidth="1.500" />
    <path d="M139 111L258 89.500L268 133.500L146.500 155.500Z" stroke="#000" strokeWidth="1.600" />
    <path d="M198.500 100L207.500 144M143.500 133.500L262.500 111" stroke="#111" />
    <path d="M27 182L30.500 202L54 198M30.500 202L33 195L48 193" stroke="#62666b" />
    <g fill="#55585c" fontFamily="Open Sans, sans-serif" fontSize="12">
      <text x="27" y="180">y</text>
      <text x="32" y="199">z</text>
      <text x="56" y="200">x</text>
    </g>
  </svg>
);

const ViewHandle = ({ name, active }: { name: string; active?: boolean }) => (
  <ViewLabel $active={active}>
    {name}
    <svg width="9" height="12" aria-hidden="true">
      <path d="M.5 0v12" stroke="currentColor" />
      <path d="M2 4h6.500l-3.200 4z" fill="currentColor" />
    </svg>
  </ViewLabel>
);

const TOOL_TABS = ['标准', '工作平面', '设定视图', '显示', '选取', '工作视窗配置', '可见性', '变动', '曲线工具', '曲面工具', '实体工具', '网格工具', '渲染工具', '出图', '5.0 的新功能'];
const MENUS = ['文件(F)', '编辑(E)', '查看(V)', '曲线(C)', '曲面(S)', '实体(O)', '网格(M)', '尺寸标注(D)', '变动(T)', '工具(L)', '分析(A)', '渲染(R)', '面板(P)', '说明(H)'];

const RedPlus = () => (
  <svg width="12" height="12" aria-hidden="true">
    <circle cx="6" cy="7" r="5" fill="#b0101c" />
    <path d="M6 4.500v5M3.500 7h5" stroke="#fff" strokeWidth="1.600" />
  </svg>
);

const Where = () => (
  <WhereLink href="#where">
    <RedPlus />
    <span>可以在哪裡找到這個<br />指令?</span>
  </WhereLink>
);

export default function App() {
  return (
    <Window>
      <GlobalStyle />
      <SharedPaints />
      <TitleBar>
        <svg width="13" height="13" aria-hidden="true">
          <rect width="13" height="13" fill="#1d2328" />
          <path d="M1 2c3 3 5 2 6 0l3 2 2-2v5c-1 4-6 5-10 4 2-1 3-2 2-4C2 6 1 4 1 2z" fill="#e9ecef" />
        </svg>
        <Title>未命名 - Undefined (Undefined) (64-bit)</Title>
        <CaptionButtons>
          <CaptionButton aria-label="最小化">
            <svg width="11" height="6"><rect x=".5" y="1.500" width="9" height="3" fill="#fff" stroke="#556" /></svg>
          </CaptionButton>
          <CaptionButton aria-label="最大化">
            <svg width="10" height="8"><path d="M.5.500h8v6h-8zM3 2.500h3v2H3z" fill="#fff" stroke="#556" fillRule="evenodd" /></svg>
          </CaptionButton>
          <CaptionButton $close aria-label="关闭">
            <svg width="10" height="8"><path d="M1.500 1l6 6M7.500 1l-6 6" stroke="#5b2a2a" strokeWidth="3.400" /><path d="M1.500 1l6 6M7.500 1l-6 6" stroke="#fff" strokeWidth="2" /></svg>
          </CaptionButton>
        </CaptionButtons>
      </TitleBar>

      <Client>
        <MenuBar>
          {MENUS.map((m) => <MenuItem key={m}>{m}</MenuItem>)}
        </MenuBar>

        <CommandArea>
          <CommandRow>
            <CommandText as="span">指令<Latin>: _Hide</Latin></CommandText>
            <Spacer />
            <Stepper><svg width="7" height="12"><path d="M.5 3L3.500 0l3 3zM.5 9l3 3 3-3z" fill="#444" /></svg></Stepper>
          </CommandRow>
          <CommandRow $prompt>
            <CommandText htmlFor="command">指令<Latin>:</Latin></CommandText>
            <CommandInput id="command" />
            <Stepper $tint><svg width="7" height="9"><path d="M.5 3.500L3.500 0l3 3.500zM.5 5.500l3 3.500 3-3.500z" fill="#6f7fa8" /></svg></Stepper>
          </CommandRow>
        </CommandArea>

        <TabStrip>
          {TOOL_TABS.map((t, i) => <ToolTab key={t} $on={i === 0}>{t}</ToolTab>)}
          <Spacer />
          <button aria-label="工具列选项"><Glyph size={14} art={<Gear />} /></button>
        </TabStrip>
        <ToolBar>
          <ToolRow><Tools items={STANDARD} /></ToolRow>
        </ToolBar>

        <Workspace>
          <Palette>
            <PaletteGrip />
            <PaletteGrid><Tools items={PALETTE} /></PaletteGrid>
          </Palette>

          <Center>
            <Viewports>
              <Viewport $active>
                <FlatGrid id="grid-top" pitch={37.67} ox={175} oy={101.5}>
                  <rect x="103" y="98" width="171" height="65" fill="#e7e7e7" />
                  <Triad x={31.5} y={203.500} h="x" v="y" />
                </FlatGrid>
                <ViewHandle name="Top" active />
              </Viewport>
              <Viewport>
                <PerspectiveScene />
                <ViewHandle name="Perspective" />
              </Viewport>
              <Viewport>
                <FlatGrid id="grid-front" pitch={24.33} ox={185} oy={109}>
                  <path d="M138 65H249.500" stroke="#000" strokeWidth="1.600" />
                  <Triad x={31.5} y={198.500} h="x" v="z" />
                </FlatGrid>
                <ViewHandle name="Front" />
              </Viewport>
              <Viewport>
                <FlatGrid id="grid-right" pitch={30.1} ox={195} oy={75.5}>
                  <path d="M145.500 20.500H197.500" stroke="#000" strokeWidth="1.600" />
                  <Triad x={30.5} y={198.500} h="y" v="z" />
                </FlatGrid>
                <ViewHandle name="Right" />
              </Viewport>
            </Viewports>
            <ViewTabs>
              <ViewTab>Perspective</ViewTab>
              <ViewTab $on>Top</ViewTab>
              <ViewTab>Front</ViewTab>
              <ViewTab>Right</ViewTab>
              <ViewTab aria-label="新增">
                <svg width="11" height="9"><path d="M4 .5h2v3h3v2H6v3H4v-3H1v-2h3z" fill="#fff" stroke="#667" strokeWidth=".8" /></svg>
              </ViewTab>
            </ViewTabs>
          </Center>

          <Panel>
            <PanelTabs>
              <PanelTab><Glyph size={15} art={<Ring r={7.5} w={4} />} />属</PanelTab>
              <PanelTab><Glyph size={15} art={<Wedge />} />图</PanelTab>
              <PanelTab>
                <Glyph size={15} art={<><rect x="2" y="4" width="19" height="13" fill="#4d565b" stroke="#222" strokeWidth="1.500" /><path d="M10 17h4v3h4v1.500H6V20h4z" fill="#333" /></>} />显
              </PanelTab>
              <PanelTab $on>
                <Glyph size={15} art={<><rect x="2" y="3" width="19" height="18" rx="2" fill="#fff" stroke="#2a3f9a" strokeWidth="1.500" /><path d="M2 3h19v4H2z" fill="#3456c0" /><circle cx="12" cy="14" r="6.500" fill="#3350bd" /><path d="M9.800 12.500c0-3 4.800-2.500 4.400 0-.2 1.500-2.200 1.500-2.200 3.500M12 17v1.500" stroke="#fff" strokeWidth="1.600" fill="none" /></>} />说
              </PanelTab>
              <Spacer />
              <button aria-label="面板选项"><Glyph size={14} art={<Gear />} /></button>
            </PanelTabs>
            <PanelBody>
              <SearchBox aria-label="搜索" />
              <AutoUpdate htmlFor="auto-update">
                <TickBox id="auto-update" type="checkbox" defaultChecked />
                自动更新
              </AutoUpdate>
              <HelpFrame>
                <HelpPage>
                  <ShowButton>顯示</ShowButton>
                  <CommandTitle><Glyph size={26} art={<Bulb />} />Hide</CommandTitle>
                  <Where />
                  <SectionTitle>Hide 指令</SectionTitle>
                  <Paragraph>隱藏選取的物件。</Paragraph>
                  <StepsTitle>步驟</StepsTitle>
                  <Steps>
                    <Step>
                      <svg width="8" height="10"><path d="M1.500.500v9l5-4.500z" fill="#777" stroke="#444" /></svg>
                      <span><a href="#select">選取</a>要隱藏的<br />物件。</span>
                    </Step>
                  </Steps>
                  <CommandTitle $compact><Glyph size={26} art={<Bulb />} />Show</CommandTitle>
                  <Where />
                  <SectionTitle>Show 指令</SectionTitle>
                  <Paragraph>重新顯示已經隱藏的</Paragraph>
                </HelpPage>
                <HelpScroll>
                  <svg width="6" height="4"><path d="M0 4l3-4 3 4z" fill="#444" /></svg>
                  <ScrollThumb><svg width="6" height="7"><path d="M0 .5h6M0 3.500h6M0 6.500h6" stroke="#555" /></svg></ScrollThumb>
                  <svg width="6" height="4"><path d="M0 0l3 4 3-4z" fill="#444" /></svg>
                </HelpScroll>
              </HelpFrame>
              <HelpScrollAcross>
                <svg width="4" height="6"><path d="M0 0l4 3-4 3z" fill="#444" /></svg>
              </HelpScrollAcross>
            </PanelBody>
          </Panel>
        </Workspace>

        <StatusBar>
          <StatusCell $w={59}>工作平面</StatusCell>
          <StatusCell $w={74}><Latin>x 16.261</Latin></StatusCell>
          <StatusCell $w={74}><Latin>y -9.857</Latin></StatusCell>
          <StatusCell $w={74}><Latin>z 0.000</Latin></StatusCell>
          <StatusCell $w={74}>毫米</StatusCell>
          <StatusCell><Swatch />预设值</StatusCell>
          <StatusCell $w={61}>锁定格点</StatusCell>
          <StatusCell $w={35}>正交</StatusCell>
          <StatusCell $w={61}>平面模式</StatusCell>
          <StatusCell $w={60}>物件锁点</StatusCell>
          <StatusCell $w={60} $on>智慧轨迹</StatusCell>
          <StatusCell $w={48}>操作轴</StatusCell>
          <StatusCell $w={86}>记录建构历史</StatusCell>
          <StatusCell $w={48}>过滤器</StatusCell>
          <StatusCell $w={7}>(</StatusCell>
          <StatusCell $w={21} aria-label="状态" />
        </StatusBar>
      </Client>

      <Watermark>
        <svg width="35" height="36" viewBox="0 0 35 36" fill="none" stroke="#ccd1dc" aria-hidden="true">
          <path d="M4 4C2 5 1.300 7 1.300 9v17c0 6 4 9 9.500 8" strokeWidth="2.200" strokeLinecap="round" />
          <path d="M11.500 29c-3 .5-4.500-1-4.500-4V7c0-4 3-6 7-4.500C20 5 26 8 31 13c3 3.500 2.500 7.500-.5 10-5 4.500-10 7.500-16 10-2 .7-3.500 1-4.500 1" strokeWidth="2.300" strokeLinecap="round" />
          <path d="M14 13l7.500 4.500-7.500 4.500z" fill="#ccd1dc" stroke="none" />
          <path d="M23.500 13v9" strokeWidth="1.600" />
        </svg>
        <Brand>
          <BrandName>溜溜自学</BrandName>
          <BrandSite>ZiXUe.3066.COM</BrandSite>
        </Brand>
      </Watermark>
    </Window>
  );
}
